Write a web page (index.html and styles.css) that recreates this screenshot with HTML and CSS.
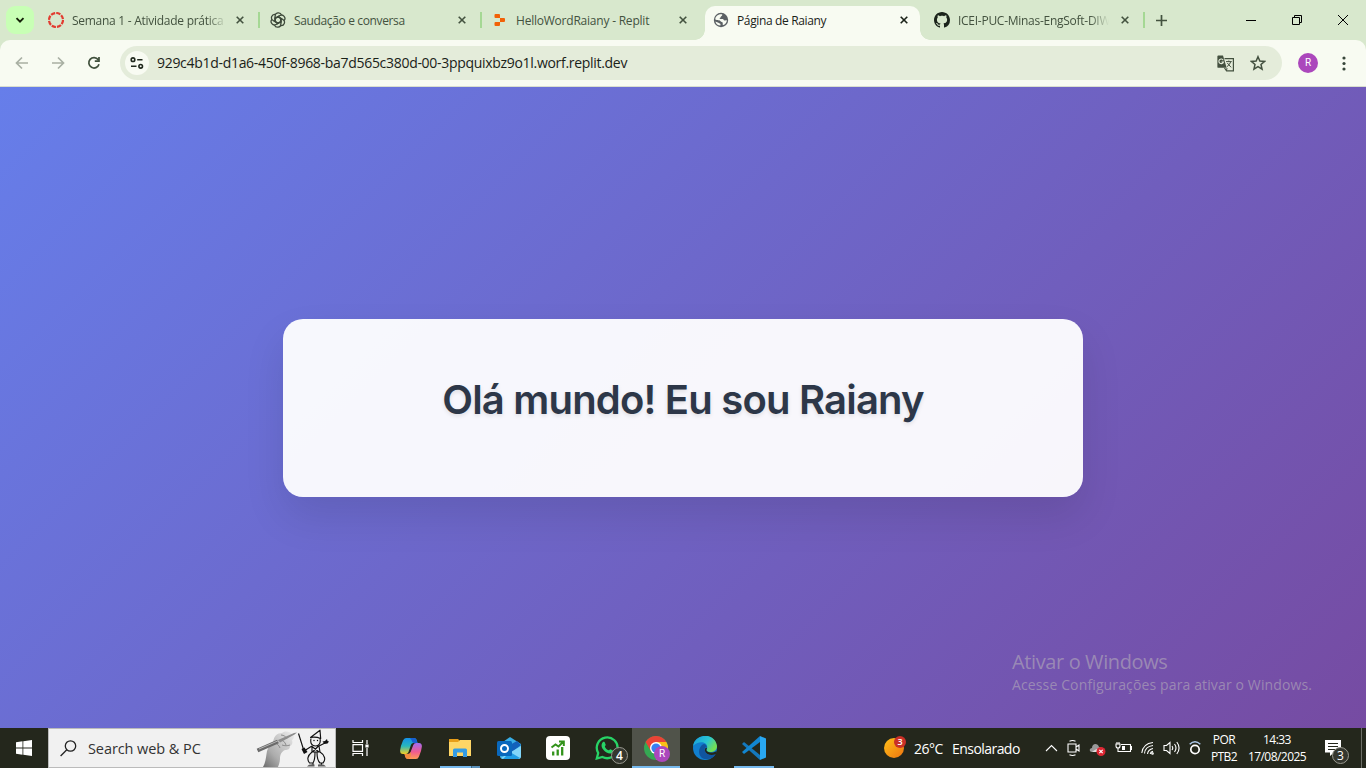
FILE: index.html
```html
<!DOCTYPE html>
<html lang="pt-BR">
<head>
<meta charset="utf-8">
<title>Página de Raiany</title>
<link rel="stylesheet" href="styles.css">
</head>
<body>
<header class="tabstrip">
  <button class="tab-search" aria-label="Pesquisar guias"><svg width="10" height="10" viewBox="0 0 10 10"><path d="M1.5 3.2 5 6.7 8.5 3.2" fill="none" stroke="#142008" stroke-width="1.9"/></svg></button>
  <div class="tab t1">
    <svg class="fav" viewBox="0 0 16 16"><circle cx="8" cy="8" r="7" fill="none" stroke="#e23c30" stroke-width="2.2" stroke-dasharray="4.4 1.1"/></svg>
    <span class="title s1 fade">Semana 1 - Atividade prática</span>
    <svg class="close" viewBox="0 0 8 8"><path d="M.7.7 7.3 7.3M7.3.7.7 7.3"/></svg>
  </div>
  <i class="sep"></i>
  <div class="tab t2">
    <svg class="fav" viewBox="0 0 16 16"><g fill="none" stroke="#3d493a" stroke-width="1.25"><path id="petal" d="M5.1 10.1V4.1c0-3.8 5.2-4.5 6.4-1.2M5.2 6.3 8 4.7l4.3 2.5"/><use href="#petal" transform="rotate(60 8 8)"/><use href="#petal" transform="rotate(120 8 8)"/><use href="#petal" transform="rotate(180 8 8)"/><use href="#petal" transform="rotate(240 8 8)"/><use href="#petal" transform="rotate(300 8 8)"/></g></svg>
    <span class="title s2">Saudação e conversa</span>
    <svg class="close" viewBox="0 0 8 8"><path d="M.7.7 7.3 7.3M7.3.7.7 7.3"/></svg>
  </div>
  <i class="sep"></i>
  <div class="tab t3">
    <svg class="fav" viewBox="0 0 16 16"><path fill="#f26207" d="M3.500 2H7q1 0 1 1v3H3.500q-1 0-1-1V3q0-1 1-1zM8 6h4q1 0 1 1v2q0 1-1 1H8zM3.500 10H8v3q0 1-1 1H3.500q-1 0-1-1v-2q0-1 1-1z"/></svg>
    <span class="title s3">HelloWordRaiany - Replit</span>
    <svg class="close" viewBox="0 0 8 8"><path d="M.7.7 7.3 7.3M7.3.7.7 7.3"/></svg>
  </div>
  <div class="tab t4 active">
    <svg class="fav" viewBox="0 0 16 16"><circle cx="8" cy="8" r="7.200" fill="#5b6064"/><path fill="#f8fbf2" d="M8.800 2.200c1 .3.300 1.500-.5 2-.8.400-.2 1.100-1.200 1.600-.9.300-.4 1.200.4 1.200h2.300c.8 0 .8 1.400 1.700 1.500.9 0 2-.2 2.400-.8.100 2.500-1.400 4.500-3.400 5.400-1.500-.2-.6-1.600-.7-2.200-.2-1-1.800-.6-2.200-1.600C7.200 7.800 4 8.400 2.300 7.400c0-2.700 2-5.400 6.500-5.200zM2.400 9.400l3 1.400c.7.400 1.200.9 1.900 1 .5.500.1 1.100.1 1.800C4.800 13.300 3 11.800 2.400 9.400z"/></svg>
    <span class="title s4">Página de Raiany</span>
    <svg class="close" viewBox="0 0 8 8"><path d="M.7.7 7.3 7.3M7.3.7.7 7.3"/></svg>
  </div>
  <div class="tab t5">
    <svg class="fav" viewBox="0 0 16 16"><path fill="#1b241b" d="M8 0C3.580 0 0 3.580 0 8c0 3.540 2.290 6.530 5.470 7.590.4.070.55-.17.55-.38 0-.19-.01-.82-.01-1.490-2.010.37-2.530-.49-2.690-.94-.09-.23-.48-.94-.82-1.130-.28-.15-.68-.52-.01-.53.630-.01 1.080.58 1.230.82.720 1.210 1.870.87 2.330.66.070-.52.280-.87.510-1.070-1.780-.2-3.640-.89-3.640-3.950 0-.87.310-1.590.82-2.150-.08-.2-.36-1.020.08-2.120 0 0 .67-.21 2.200.82.640-.18 1.320-.27 2-.27s1.360.09 2 .27c1.530-1.040 2.200-.82 2.200-.82.440 1.100.160 1.920.080 2.120.51.560.820 1.270.820 2.150 0 3.070-1.870 3.750-3.650 3.950.29.250.54.730.54 1.480 0 1.070-.01 1.930-.01 2.200 0 .21.150.46.550.38A8 8 0 0 0 16 8c0-4.420-3.580-8-8-8z"/></svg>
    <span class="title s5 fade">ICEI-PUC-Minas-EngSoft-DIW</span>
    <svg class="close" viewBox="0 0 8 8"><path d="M.7.7 7.3 7.3M7.3.7.7 7.3"/></svg>
  </div>
  <i class="sep"></i>
  <svg class="plus" width="11" height="11" viewBox="0 0 11 11"><path d="M5.500 0v11M0 5.500h11" stroke="#43523f" stroke-width="1.700"/></svg>
  <div class="win">
    <svg viewBox="0 0 12 12"><path d="M1 6.500h10"/></svg>
    <svg viewBox="0 0 12 12"><path d="M1.500 3.500h7v7h-7zM3.500 3.500v-2h7v7h-2"/></svg>
    <svg viewBox="0 0 12 12"><path d="m1 1 10 10M11 1 1 11"/></svg>
  </div>
</header>
<nav class="toolbar">
  <svg class="nav off" viewBox="0 0 14 14"><path d="M13 7H2M7 1.500 1.500 7 7 12.500"/></svg>
  <svg class="nav off" viewBox="0 0 14 14"><path d="M1 7h11M7 1.500 12.500 7 7 12.500"/></svg>
  <svg class="nav" viewBox="0 0 14 14"><path d="M11.200 3.700A5.200 5.200 0 1 0 12 8.300M12 1v4.200H7.800"/></svg>
  <div class="omnibox">
    <span class="site"><svg width="14" height="12" viewBox="0 0 14 12"><g fill="none" stroke="#20291d" stroke-width="1.600"><circle cx="3" cy="2.700" r="1.800"/><path d="M7.200 2.700H12.500M1 9.300h5.500"/><circle cx="10.700" cy="9.300" r="1.800"/></g></svg></span>
    <span class="url">929c4b1d-d1a6-450f-8968-ba7d565c380d-00-3ppquixbz9o1l.worf.replit.dev</span>
    <svg class="translate" width="17" height="17" viewBox="0 0 17 17"><path fill="none" stroke="#43503f" stroke-width="1.200" d="M7.500 3.600h8.900v12.300H9.600L7.500 13"/><path fill="#43503f" d="M1.300.500H6l3.600 12.300H1.300Q.4 12.800.4 11.900V1.400Q.4.500 1.300.500z"/><path fill="none" stroke="#e4ecda" stroke-width="1.100" d="M6.200 5.200A2.300 2.300 0 1 0 6.400 7H4.500"/><path fill="none" stroke="#43503f" d="M9 6.600h5.700M11.800 5.500v1.100M13.800 6.600q-.8 3-4 5.200M10.300 8l3.800 4.300M10 13l-.5 2.700"/></svg>
    <svg class="star" width="16" height="16" viewBox="0 0 16 16"><path fill="none" stroke="#43503f" stroke-width="1.500" d="m8 1.700 1.850 4.300 4.700.4-3.550 3.100 1.050 4.600L8 11.700l-4.050 2.400L5 9.500 1.450 6.400l4.700-.4z"/></svg>
  </div>
  <span class="avatar">R</span>
  <svg class="dots" width="4" height="15" viewBox="0 0 4 15"><g fill="#38463a"><circle cx="2" cy="2" r="1.600"/><circle cx="2" cy="7.500" r="1.600"/><circle cx="2" cy="13" r="1.600"/></g></svg>
</nav>
<main class="page">
  <section class="card"><h1>Olá mundo! Eu sou Raiany</h1></section>
  <aside class="activate"><b>Ativar o Windows</b><span>Acesse Configurações para ativar o Windows.</span></aside>
</main>
<footer class="taskbar">
  <div class="start"><svg width="16" height="16" viewBox="0 0 16 16"><path fill="#fff" d="M0 2.200 6.500 1.300v6.300H0zM7.300 1.200 16 0v7.600H7.300zM0 8.400h6.500v6.300L0 13.800zM7.300 8.400H16V16l-8.700-1.200z"/></svg></div>
  <div class="search">
    <svg class="glass" width="17" height="17" viewBox="0 0 17 17"><g fill="none" stroke="#222" stroke-width="1.300"><circle cx="10.500" cy="6" r="5.200"/><path d="M6.800 9.700.6 16"/></g></svg>
    <span>Search web &amp; PC</span>
    <svg class="art" width="76" height="38" viewBox="0 0 76 38">
      <defs><linearGradient id="hand" x1="0" y1="1" x2="1" y2="0"><stop stop-color="#6d6d6d"/><stop offset=".35" stop-color="#adadad"/><stop offset="1" stop-color="#ededed"/></linearGradient></defs>
      <path fill="url(#hand)" d="M7 38c3-5 3-11 4-16 1-4 4-7 6-9 1-6 4-9 9-9 4-3 8-1 10 1 3 1 2 5 0 6 1 3 0 5-2 6 0 3-2 4-5 4-4 2-5 5-5 9 0 3-1 5-2 8z"/>
      <path stroke="#858585" stroke-width=".9" fill="none" d="M18 13c3 2 5 3 6 6M25 6c3 0 5 2 6 4M26 16c3 1 5 1 8 0M24 11c3 0 5 2 6 5"/>
      <path stroke="#6a6a6a" stroke-width="4" d="M1.500 21.500 22 12.500"/><path stroke="#b5b5b5" stroke-width="1" d="M3 20 24 11"/><path fill="#8c8c8c" d="m22 11 16-7 3-.6-2.500 2L24 13.500z"/>
      <g fill="none" stroke="#111" stroke-width="1.150" stroke-linejoin="round"><path d="M42.500 4.500 48 22l8-5M54.500 8.500 64 1.200l.7 8.300q-5-2-10.200-1zM55 9.500c-1 5 1 7.500 4.500 7.500s5.500-3 4.500-7.500M56 17.500l7 5.500M62.500 17l-6 6M56 17v6h8l-1-6 6-3M56 23c-5 4-5 8-2.500 11h3.500q2-3 2-10.500M61 23.500q0 7.500 3 10.500h3c3-3 2-8-3-11M57 34v2M65.500 34v2"/></g>
      <path fill="#111" d="m45.500 20 3-1.500 3 4.500-3.500 2zM66.500 12.500l2.500-.5 2-2 .5 2 1.500.5-1.500 2-3 .5z"/><path fill="#5c5c5c" d="M51 37.500q2-3 7.500-2v2zM62 37.500v-2q6-1 8 2z"/><circle cx="58" cy="11.500" r=".7"/><circle cx="61.500" cy="11.500" r=".7"/>
    </svg>
  </div>
  <div class="app first"><svg width="17" height="16" viewBox="0 0 17 16"><path fill="none" stroke="#fff" stroke-width="1.200" d="M1 0v2.500h9.500V0M1 16v-2.500h9.500V16M1 4.600h9.500v6.800H1zM15 0v4M15 8v8"/><path fill="#fff" d="M13.400 4.500h3.200v3h-3.200z"/></svg></div>
  <div class="app"><svg width="22" height="21" viewBox="0 0 22 21"><defs><linearGradient id="c1" x2="0" y2="1"><stop stop-color="#1590e8"/><stop offset=".5" stop-color="#28b7bd"/><stop offset="1" stop-color="#f4cf24"/></linearGradient><linearGradient id="c2" x2="0" y2="1"><stop stop-color="#a16cf0"/><stop offset=".55" stop-color="#f05b91"/><stop offset="1" stop-color="#ff9b55"/></linearGradient></defs><path fill="url(#c1)" d="M6 0h8q2 0 2.700 2l.8 3h-4q-2 0-2.600 2L8.500 14q-.7 2-2.500 2H3q-3 0-2.900-3.500Q.5 8 3 2.500 4 0 6 0z"/><path fill="#175fd0" d="M10 0h4q2 0 2.700 2l.8 3h-4q-1.700-1-2-3z"/><path fill="url(#c2)" d="M16 5h3q3 0 2.900 3.500-.4 4.500-2.900 10Q18 21 16 21H8q-2 0-2.700-2l-.8-3H8q2 0 2.600-2l2.700-7Q14 5 16 5z"/><path fill="#f38c3d" d="M4.500 16H8q2 0 3-2 .4 5-2.500 7Q6 21 5.300 19z"/></svg></div>
  <div class="app explorer"><svg width="22" height="20" viewBox="0 0 22 20"><path fill="#e89e19" d="M0 1h9l2 2v4H0z"/><path fill="#ffd666" d="M0 4h9l2-2h11v16H0z"/><path fill="#349ce4" d="M4 12q0-1.500 1.500-1.500h11Q18 10.500 18 12v7h-4v-4.500H8V19H4z"/></svg><i></i></div>
  <div class="app"><svg width="25" height="24" viewBox="0 0 25 24"><path fill="#38aee7" d="m3 8 10-7 11 7v12q0 3-3 3H6q-3 0-3-3z"/><path fill="#1261bb" d="m11 10 9-5 4 4-10 8z"/><path fill="#82d6fa" d="m4 22 20-12v10q0 3-3 3H6z"/><path fill="#209ee5" d="m13 16 10 6-2 1H6z"/><rect y="5" width="15" height="15" rx="1.500" fill="#0968bd"/><circle cx="7.500" cy="12.500" r="3.500" fill="none" stroke="#fff" stroke-width="2"/></svg></div>
  <div class="app"><svg width="24" height="24" viewBox="0 0 24 24"><rect width="24" height="24" rx="4" fill="#fff"/><g fill="none" stroke="#32931b"><path stroke-width="2.300" d="M7.200 19.500v-4M11.700 19.500v-6M16.200 19.500V11"/><path stroke-width="2" d="m5.500 11.500 4-3 3 2L17 6M13 5.500h4.800V10"/></g></svg></div>
  <div class="app wa"><svg width="24" height="24" viewBox="0 0 24 24"><path fill="none" stroke="#27d366" stroke-width="2.300" d="M1.800 22.500 3.200 17A10.400 10.400 0 1 1 7.400 21z"/><path fill="#27d366" d="M8 6c1-.7 1.700 0 2 1l.7 1.800c.2.700-1 1.500-.8 1.900.8 1.700 2 2.800 3.700 3.600.5.200 1.300-1.300 1.900-1.100l2.300 1.200c.7.600-.3 2.300-1.500 2.900-2.300 1-5.800-1.200-7.500-3.100C6.900 12 5.300 9 8 6z"/></svg><em class="badge">4</em></div>
  <div class="app current"><svg width="24" height="24" viewBox="0 0 24 24"><circle cx="12" cy="12" r="12" fill="#35a853"/><path fill="#e94336" d="M1.600 6A12 12 0 0 1 22.400 6H12L6.800 15z"/><path fill="#fbc016" d="M22.400 6A12 12 0 0 1 12 24l5.200-9L12 6z"/><circle cx="12" cy="12" r="6" fill="#fff"/><circle cx="12" cy="12" r="4.600" fill="#367ff3"/></svg><em class="profile">R</em><i></i></div>
  <div class="app"><svg width="24" height="24" viewBox="0 0 24 24"><defs><linearGradient id="e" y2=".5"><stop stop-color="#1698dd"/><stop offset=".6" stop-color="#29c6d2"/><stop offset="1" stop-color="#74df54"/></linearGradient></defs><circle cx="12" cy="12" r="12" fill="#117fce"/><path fill="url(#e)" d="M0 10C2-3 22-4 24 10c0 4-3 6-7 6-3 0-4-1-3-3C16 5 5 4 0 10z"/><path fill="#10559f" d="M9 9c-6 6-2 15 5 14 4 0 7-2 9-5-5 2-10 1-11-3-1-2 0-4 2-4-1-3-3-4-5-2z"/><path fill="#22251c" d="M13.500 11.500c1.500 1-1.500 2 1 4 2 1.500 6 1.500 9-.5l-.5 3c-4 2-10 1-11-3-.5-1.500 0-3 1.500-3.500z"/></svg></div>
  <div class="app code"><svg width="24" height="24" viewBox="0 0 24 24"><path fill="#1478bd" d="m2 6 16 13v5L0 8z"/><path fill="#1286d1" d="M18 0v6L2 18l-2-2z"/><path fill="#29a8f2" d="m18 0 6 2.500v19L18 24z"/></svg><i></i></div>
  <div class="weather"><span class="sun"><em>3</em></span><span class="temp">26°C</span><span class="cond">Ensolarado</span></div>
  <div class="tray">
    <svg width="13" height="16" viewBox="0 0 13 16"><path d="m1 11 5.500-5.500L12 11"/></svg>
    <svg width="13" height="16" viewBox="0 0 13 16"><path d="M1 4h8v8H1zM9 7l3-2v6L9 9M2.500 1.300Q5.500-.2 8.500 1.300M2.500 14.700q3 1.500 6 0"/></svg>
    <svg width="17" height="16" viewBox="0 0 17 16"><path fill="#999" stroke="none" d="M3 12C0 12 0 8 3 8c0-5 6-5 7-1 4-1 5 5 1 5z"/><path fill="#ddd" stroke="none" d="M3 12q5-4 9-4l-2 4z"/><circle cx="12" cy="11.500" r="4.500" fill="#dc2632" stroke="none"/><path d="m10.300 9.800 3.400 3.400m0-3.400-3.400 3.400"/></svg>
    <svg width="17" height="16" viewBox="0 0 17 16"><path d="M6 4.500h9.500v7H5.500M15.500 6.500h1v3h-1M1 4h4v2q0 2-2 2T1 6zM2 2v2M4 2v2M3 8v3.500h3"/><path fill="#fff" stroke="none" d="M7 6h3v4H7z"/></svg>
    <svg width="13" height="16" viewBox="0 0 13 16"><path d="M.8 13Q2 3.500 12 2.500M3.500 13.500Q4 6.500 12 5.500M6.500 14Q7 9.500 12 8.500M9.200 14q.3-2 2.800-2.600"/><circle cx="11.500" cy="13.500" r=".8"/></svg>
    <svg width="17" height="16" viewBox="0 0 17 16"><path d="M1 5.500h2.500L7 2.500v11l-3.500-3H1zM9 6q1.500 2 0 4M11.500 4q3 4 0 8M13.800 2q4.500 6 0 12"/></svg>
    <svg width="12" height="16" viewBox="0 0 12 16"><circle cx="6" cy="9.500" r="4.200" stroke-width="1.700"/><path d="M.7 4.200Q6-.8 11.300 4.200" stroke="#afc9ea" stroke-width="1.500"/></svg>
  </div>
  <div class="two lang"><span>POR</span><span>PTB2</span></div>
  <div class="two clock"><span>14:33</span><span>17/08/2025</span></div>
  <div class="note"><svg width="16" height="16" viewBox="0 0 16 16"><path fill="#fff" d="M0 0h16v12.500H9L5 16v-3.500H0z"/><path stroke="#24271c" d="M3 3.500h10M3 6.500h10M3 9.500h8"/></svg><em class="badge">3</em></div>
  <i class="peek"></i>
</footer>
</body>
</html>
```

FILE: styles.css
```css
* { box-sizing: border-box; }
body { margin: 0; width: 1366px; height: 768px; overflow: hidden; display: flex; flex-direction: column; font-family: "Open Sans", "Noto Sans", sans-serif; background: #d8e8cd; }
svg { display: block; flex: none; }
em { font-style: normal; }

.tabstrip { height: 40px; display: flex; align-items: center; flex: none; }
.tab-search { width: 28px; height: 28px; margin-left: 6px; border: 0; border-radius: 9px; background: #c8ffb5; padding: 0; display: grid; place-items: center; }
.tab { display: flex; align-items: center; height: 34px; flex: none; color: #43523f; font-size: 12px; }
.t1 { width: 224px; padding: 0 14px; }
.t2 { width: 220px; padding: 0 14px 0 10px; }
.t3 { width: 223px; padding: 0 18px 0 10px; }
.t4 { width: 215px; padding: 0 12px 0 8px; }
.t5 { width: 223px; padding: 0 14px; }
.fav { width: 16px; height: 16px; margin-right: 8px; }
.title { white-space: nowrap; overflow: hidden; flex: 1; line-height: 18px; padding-top: 1px; }
.s1 { letter-spacing: -.27px; } .s2 { letter-spacing: -.36px; } .s3 { letter-spacing: -.22px; } .s4 { letter-spacing: -.36px; } .s5 { letter-spacing: -.27px; }
.fade { margin-right: 12px; -webkit-mask-image: linear-gradient(90deg, #000 87%, transparent); mask-image: linear-gradient(90deg, #000 87%, transparent); }
.s1.fade { margin-right: 9px; }
.close { width: 8px; height: 8px; fill: none; stroke: #43523f; stroke-width: 1.6; }
.active { position: relative; align-self: flex-end; background: #f8fbf2; border-radius: 10px 10px 0 0; color: #1a2218; padding-bottom: 6px; }
.active .close { stroke: #1a2218; }
.active::before, .active::after { content: ""; position: absolute; bottom: 0; width: 10px; height: 10px; }
.active::before { left: -10px; background: radial-gradient(circle at 0 0, transparent 9.5px, #f8fbf2 10px); }
.active::after { right: -10px; background: radial-gradient(circle at 100% 0, transparent 9.5px, #f8fbf2 10px); }
.sep { width: 2px; height: 16px; background: #a5d894; flex: none; }
.plus { margin-left: 11px; }
.win { display: flex; gap: 34px; margin-left: auto; margin-right: 17px; }
.win svg { width: 12px; height: 12px; fill: none; stroke: #000; }

.toolbar { height: 47px; flex: none; display: flex; align-items: center; background: #f8fbf2; border-radius: 10px 10px 0 0; border-bottom: 1px solid #d9decf; padding: 0 20px 0 15px; }
.nav { width: 14px; height: 14px; margin-right: 22px; fill: none; stroke: #3f4f3b; stroke-width: 1.7; }
.nav.off { stroke: #a9b0a3; }
.omnibox { height: 34px; width: 1162px; margin-left: -3px; border-radius: 17px; background: #e4ecda; display: flex; align-items: center; padding: 0 16px 0 5px; }
.site { width: 24px; height: 24px; border-radius: 50%; background: #f8fbf2; display: grid; place-items: center; }
.url { margin-left: 8px; padding-bottom: 1px; font-size: 14px; letter-spacing: -.3px; color: #1a2218; white-space: nowrap; }
.translate { margin-left: auto; margin-right: 16px; }
.avatar { margin-left: 16px; width: 20px; height: 20px; border-radius: 50%; background: #ab47bc; color: #fff; font: 10px/20px Roboto, sans-serif; text-align: center; }
.dots { margin-left: auto; }

.page { height: 641px; flex: none; display: grid; place-items: center; position: relative; background: linear-gradient(135deg, #667eea 0%, #764ba2 100%); }
.card { width: 800px; height: 178px; border-radius: 20px; background: rgba(255,255,255,.95); box-shadow: 0 20px 40px rgba(0,0,0,.1); padding-top: 57px; text-align: center; }
h1 { margin: 0; font: 600 40px/48px Inter, sans-serif; letter-spacing: -.8px; color: #2d3748; text-shadow: 0 2px 4px rgba(0,0,0,.1); white-space: nowrap; }
.activate { position: absolute; left: 1012px; top: 562px; display: flex; flex-direction: column; color: rgba(174,164,184,.68); white-space: nowrap; }
.activate b { font-weight: 400; font-size: 20px; line-height: 26px; letter-spacing: -.38px; }
.activate span { font-size: 14px; line-height: 20px; letter-spacing: .13px; }

.taskbar { height: 40px; flex: none; display: flex; align-items: center; background: #24271c; color: #fff; }
.start { width: 48px; display: grid; place-items: center; }
.search { width: 288px; height: 40px; border: 1px solid #bbb; background: #f1f1f1; color: #333; display: flex; align-items: center; font-size: 14.5px; padding-left: 11px; }
.search span { margin-left: 11px; letter-spacing: -.08px; white-space: nowrap; }
.art { margin-left: auto; margin-right: 3px; }
.app { width: 48px; height: 40px; margin-right: 1px; display: grid; place-items: center; position: relative; flex: none; }
.first { margin-right: 3px; }
.app i { position: absolute; bottom: 0; left: 4px; right: 4px; height: 2px; background: #76b9ed; }
.explorer i { background: linear-gradient(90deg, #76b9ed 31px, #406782 31px 32px, #5b91ba 32px); }
.current { background: #50534a; }
.app.current i { left: 0; right: 0; }
.badge, .profile { position: absolute; border-radius: 50%; text-align: center; color: #fff; }
.badge { width: 17px; height: 17px; border: 1px solid #99998f; background: #35372f; font-size: 12px; line-height: 15px; }
.wa .badge { left: 28px; top: 19px; font-weight: 600; }
.profile { width: 16px; height: 16px; left: 22px; top: 18px; background: #ab47bc; font: 10px/16px Roboto, sans-serif; }
.weather { margin-left: 105px; display: flex; align-items: center; font-size: 14px; white-space: nowrap; }
.sun { width: 20px; height: 20px; border-radius: 50%; background: linear-gradient(135deg, #ffc018, #ee7410); position: relative; }
.sun em { position: absolute; left: 10px; top: -2px; width: 12px; height: 12px; border-radius: 50%; background: #ca3027; font: 600 9px/12px "Open Sans", sans-serif; text-align: center; }
.temp { margin-left: 10px; width: 38px; letter-spacing: -.5px; }
.cond { width: 70px; letter-spacing: -.55px; }
.tray { width: 156px; margin-left: 23px; display: flex; justify-content: space-between; align-items: center; flex: none; }
.tray svg { fill: none; stroke: #fff; stroke-width: 1.1; }
.two { display: flex; flex-direction: column; align-items: center; font-size: 12px; line-height: 17px; white-space: nowrap; letter-spacing: -.55px; padding-bottom: 1px; }
.lang { width: 28px; margin-left: 9px; }
.clock { width: 60px; margin-left: 9px; }
.note { position: relative; margin-left: 18px; }
.note .badge { left: 7px; top: 7px; }
.peek { width: 1px; height: 40px; margin-left: auto; margin-right: 4px; background: #6c6e66; }
```
